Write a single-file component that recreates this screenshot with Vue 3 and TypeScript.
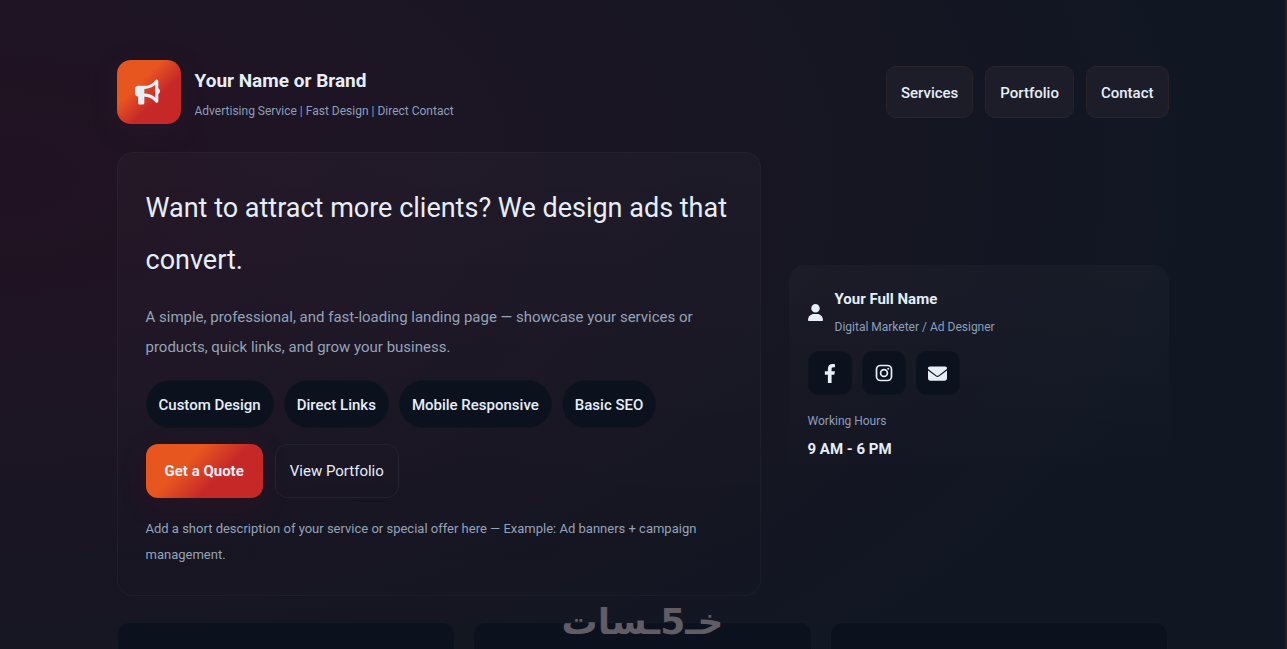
<script setup lang="ts">
const nav: string[] = ['Services', 'Portfolio', 'Contact']
const features: string[] = ['Custom Design', 'Direct Links', 'Mobile Responsive', 'Basic SEO']
const services: number[] = [1, 2, 3]
</script>

<template>
  <div class="page">
    <div class="container">
      <header class="header">
        <div class="brand">
          <div class="logo">
            <svg viewBox="0 0 576 512" width="28" height="28" aria-hidden="true">
              <path fill="currentColor" d="M480 32c0-12.900-7.800-24.600-19.800-29.600s-25.700-2.200-34.900 6.900L381.700 53c-48 48-113.100 75-181 75H192 160 64c-35.300 0-64 28.700-64 64v96c0 35.300 28.700 64 64 64l0 128c0 17.700 14.300 32 32 32h64c17.700 0 32-14.300 32-32V352l8.700 0c67.900 0 133 27 181 75l43.600 43.600c9.200 9.200 22.900 11.900 34.900 6.900s19.800-16.600 19.800-29.600V300.400c18.600-8.800 32-32.500 32-60.400s-13.400-51.600-32-60.400V32zm-64 76.700V240 371.300C357.200 317.800 280.500 288 200.700 288H192V192h8.700c79.800 0 156.500-29.800 215.300-83.300z" />
            </svg>
          </div>
          <div class="brand-text">
            <div class="brand-name">Your Name or Brand</div>
            <div class="muted">Advertising Service | Fast Design | Direct Contact</div>
          </div>
        </div>
        <nav class="nav">
          <a v-for="item in nav" :key="item" :href="'#' + item.toLowerCase()">{{ item }}</a>
        </nav>
      </header>

      <main>
        <section class="hero">
          <div class="panel intro">
            <h1>Want to attract more clients? We design ads that convert.</h1>
            <p class="lead">A simple, professional, and fast-loading landing page — showcase your services or products, quick links, and grow your business.</p>
            <ul class="features">
              <li v-for="f in features" :key="f">{{ f }}</li>
            </ul>
            <div class="actions">
              <a class="primary" href="#contact">Get a Quote</a>
              <a class="ghost" href="#portfolio">View Portfolio</a>
            </div>
            <p class="note">Add a short description of your service or special offer here — Example: Ad banners + campaign management.</p>
          </div>

          <aside class="panel profile">
            <div class="person">
              <svg viewBox="0 0 448 512" width="15" height="17" aria-hidden="true">
                <path fill="currentColor" d="M224 256A128 128 0 1 0 224 0a128 128 0 1 0 0 256zm-45.700 48C79.800 304 0 383.800 0 482.300C0 498.700 13.300 512 29.700 512H418.300c16.400 0 29.700-13.300 29.700-29.700C448 383.800 368.200 304 269.700 304H178.300z" />
              </svg>
              <div>
                <strong>Your Full Name</strong>
                <div class="muted">Digital Marketer / Ad Designer</div>
              </div>
            </div>
            <div class="socials">
              <a href="#facebook" aria-label="Facebook">
                <svg viewBox="0 0 320 512" height="19" aria-hidden="true">
                  <path fill="currentColor" d="M279.140 288l14.220-92.660h-88.910v-60.130c0-25.350 12.420-50.060 52.240-50.060h40.420V6.260S260.430 0 225.360 0c-73.220 0-121.080 44.380-121.080 124.720v70.620H22.890V288h81.390v224h100.170V288z" />
                </svg>
              </a>
              <a href="#instagram" aria-label="Instagram">
                <svg viewBox="0 0 18 18" width="18" height="18" aria-hidden="true" fill="none" stroke="currentColor" stroke-width="1.700">
                  <rect x="1.500" y="1.500" width="15" height="15" rx="4" />
                  <circle cx="9" cy="9" r="3.400" />
                  <circle cx="13.200" cy="4.800" r="1" fill="currentColor" stroke="none" />
                </svg>
              </a>
              <a href="#email" aria-label="Email">
                <svg viewBox="0 0 512 512" width="19" height="19" aria-hidden="true">
                  <path fill="currentColor" d="M48 64C21.500 64 0 85.500 0 112c0 15.100 7.100 29.300 19.200 38.400L236.800 313.600c11.400 8.500 27 8.500 38.400 0L492.800 150.400c12.100-9.100 19.200-23.300 19.200-38.400c0-26.500-21.500-48-48-48H48zM0 176V384c0 35.300 28.700 64 64 64H448c35.300 0 64-28.700 64-64V176L294.400 339.200c-22.800 17.100-54 17.100-76.800 0L0 176z" />
                </svg>
              </a>
            </div>
            <div class="muted">Working Hours</div>
            <strong>9 AM - 6 PM</strong>
          </aside>
        </section>

        <section class="services" aria-label="Services">
          <article v-for="s in services" :key="s" class="service"></article>
        </section>
      </main>
    </div>
    <div class="watermark" lang="ar" dir="rtl">خـ5ـسات</div>
  </div>
</template>

<style>
body {
  margin: 0;
  background: #0f1724;
}
</style>

<style scoped>
.page {
  position: relative;
  box-sizing: border-box;
  height: 100vh;
  overflow: hidden;
  border-right: 2px solid #261f28;
  background: radial-gradient(ellipse 95% 105% at 0% 27%, #211222 0%, #1d1524 34%, #161622 70%, #101723 100%);
  color: #e6eef8;
  font-family: Roboto, "Noto Sans", sans-serif;
  font-size: 15px;
  line-height: 30px;
}
a {
  color: inherit;
  text-decoration: none;
}
.container {
  box-sizing: border-box;
  max-width: 1100px;
  margin: 0 auto;
  padding: 60px 24px 0;
}
.header {
  display: flex;
  justify-content: space-between;
  align-items: center;
  margin-bottom: 28px;
}
.brand {
  display: flex;
  align-items: center;
  gap: 14px;
}
.logo {
  display: flex;
  align-items: center;
  justify-content: center;
  width: 64px;
  height: 64px;
  border-radius: 14px;
  background: linear-gradient(135deg, #e8561f 35%, #c62828 62%);
  box-shadow: 0 6px 24px rgba(60, 30, 50, 0.25);
}
.brand-text {
  padding-top: 4px;
}
.brand-name {
  font-size: 19px;
  font-weight: 700;
  line-height: 34px;
}
.muted {
  color: #8c9ebb;
  font-size: 12px;
  line-height: 26px;
}
.nav {
  display: flex;
  gap: 12px;
}
.nav a {
  padding: 11px 14px 9px;
  border: 1px solid #28232b;
  border-radius: 10px;
  background: #1d1d2a;
  font-weight: 500;
}
.hero {
  display: grid;
  grid-template-columns: 1fr 380px;
  gap: 28px;
  align-items: center;
}
.panel {
  border: 1px solid rgba(255, 255, 255, 0.02);
  border-radius: 16px;
  background: linear-gradient(180deg, rgba(255, 255, 255, 0.025), transparent) no-repeat border-box;
}
.intro {
  padding: 29px 28px 27px;
  border-color: rgba(255, 255, 255, 0.03);
}
h1 {
  margin: 0 0 16px;
  font-size: 27px;
  font-weight: 400;
  line-height: 52px;
}
.lead {
  margin: 0 0 18px;
  color: #94a3b8;
}
.features {
  display: flex;
  flex-wrap: wrap;
  gap: 10px;
  margin: 0 0 16px;
  padding: 0;
  list-style: none;
}
.features li {
  padding: 9px 12px 7px;
  border: 1px solid #0f1520;
  border-radius: 999px;
  background: #0b121e;
  font-weight: 500;
}
.actions {
  display: flex;
  gap: 12px;
  margin-bottom: 18px;
}
.actions a {
  padding: 12px 19px;
  border-radius: 12px;
}
.actions .primary {
  background: linear-gradient(135deg, #e8561f 35%, #c62828 62%);
  box-shadow: 0 8px 24px rgba(90, 10, 30, 0.25);
  font-weight: 700;
}
.actions .ghost {
  padding: 11px 14px;
  border: 1px solid #232230;
}
.note {
  margin: 0;
  color: #94a3b8;
  font-size: 13px;
  line-height: 26px;
}
.profile {
  padding: 18px;
  border-color: transparent;
}
.person {
  display: flex;
  align-items: center;
  gap: 12px;
}
strong {
  display: block;
}
.socials {
  display: flex;
  gap: 10px;
  margin: 11px 0 13px;
}
.socials a {
  display: flex;
  align-items: center;
  justify-content: center;
  width: 42px;
  height: 42px;
  border: 1px solid #0f1520;
  border-radius: 10px;
  background: #0b121e;
}
.services {
  display: grid;
  grid-template-columns: repeat(3, 1fr);
  gap: 18px;
  margin-top: 26px;
}
.service {
  height: 180px;
  border: 1px solid #131a26;
  border-radius: 12px;
  background: #0b121e;
}
.watermark {
  position: absolute;
  bottom: 5px;
  left: 0;
  right: 0;
  color: #625c64;
  font-family: "DejaVu Sans", sans-serif;
  font-size: 36px;
  font-weight: 700;
  line-height: 44px;
  text-align: center;
}
</style>
